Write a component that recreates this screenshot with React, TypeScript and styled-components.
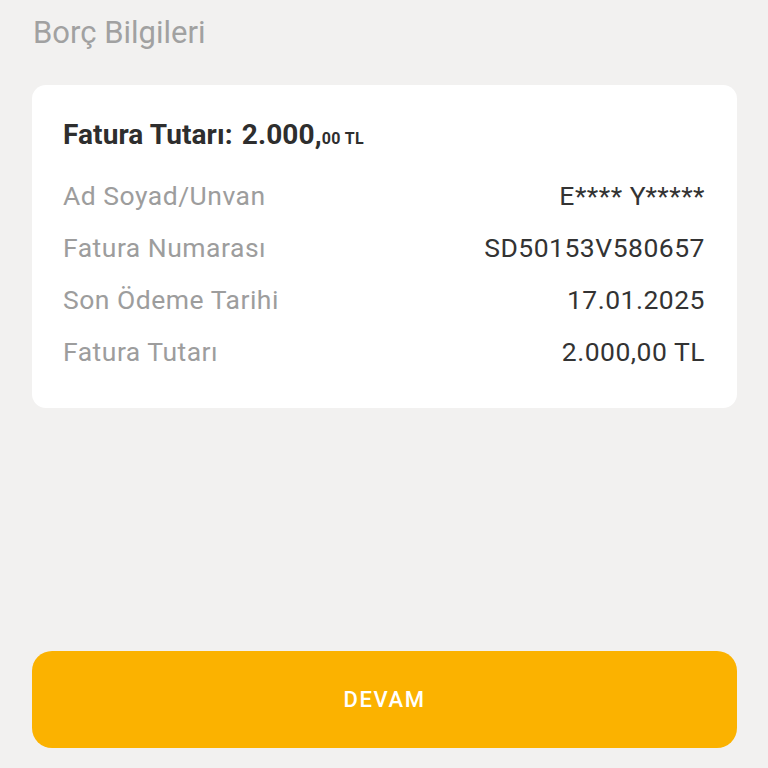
import styled, { createGlobalStyle } from "styled-components";

const GlobalStyle = createGlobalStyle`
    html, body {
        margin: 0;
        padding: 0;
        background: #f2f1f0;
        font-family: Roboto, "Noto Sans", sans-serif;
    }
`;

const Page = styled.main`
    width: 768px;
    height: 768px;
    box-sizing: border-box;
    padding: 15px 31px 20px 32px;
    display: flex;
    flex-direction: column;
`;

const Title = styled.h1`
    margin: 0 0 0 1px;
    font-size: 31px;
    line-height: 36px;
    font-weight: 400;
    color: #a1a1a1;
`;

const Card = styled.section`
    margin-top: 34px;
    background: #fff;
    border-radius: 14px;
    padding: 33px 32px 31px 31px;
    display: flex;
    flex-direction: column;
`;

const Heading = styled.div`
    font-size: 28px;
    line-height: 34px;
    font-weight: 700;
    letter-spacing: 0.1px;
    color: #2e2e2e;
    margin-bottom: 13px;
`;

const Amount = styled.span`
    margin-left: 2px;
`;

const Fraction = styled.span`
    font-size: 16px;
    letter-spacing: 0.4px;
`;

const Row = styled.div`
    display: flex;
    justify-content: space-between;
    align-items: center;
    height: 52px;
    font-size: 26.5px;
    letter-spacing: 0.5px;
`;

const Label = styled.span`
    color: #9d9d9d;
`;

const Value = styled.span`
    color: #333;
`;

const Spacer = styled.div`
    flex: 1;
`;

const Button = styled.button`
    height: 97px;
    border: none;
    border-radius: 20px;
    background: #fbb200;
    color: #fff;
    font-family: Roboto, sans-serif;
    font-size: 22px;
    font-weight: 500;
    letter-spacing: 1.6px;
    cursor: pointer;
`;

const rows: [string, string][] = [
    ["Ad Soyad/Unvan", "E**** Y*****"],
    ["Fatura Numarası", "SD50153V580657"],
    ["Son Ödeme Tarihi", "17.01.2025"],
    ["Fatura Tutarı", "2.000,00 TL"],
];

export default function App() {
    return (
        <>
            <GlobalStyle />
            <Page>
                <Title>Borç Bilgileri</Title>
                <Card>
                    <Heading>
                        Fatura Tutarı: <Amount>2.000,</Amount>
                        <Fraction>00 TL</Fraction>
                    </Heading>
                    {rows.map(([label, value]) => (
                        <Row key={label}>
                            <Label>{label}</Label>
                            <Value>{value}</Value>
                        </Row>
                    ))}
                </Card>
                <Spacer />
                <Button>DEVAM</Button>
            </Page>
        </>
    );
}
